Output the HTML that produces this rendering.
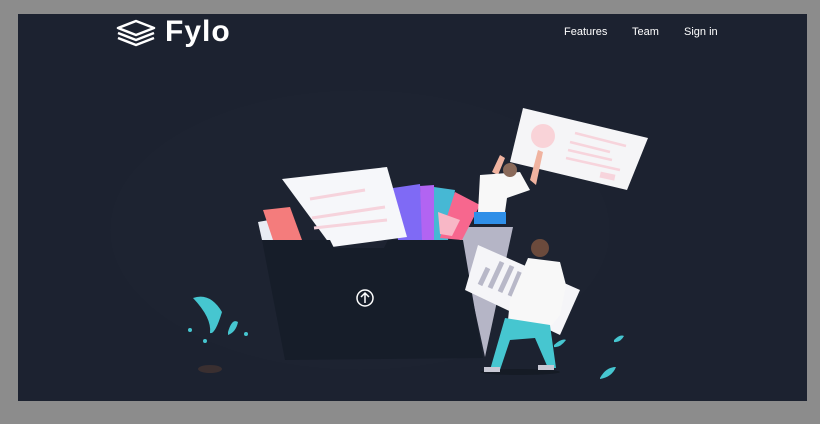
<!DOCTYPE html>
<html><head><style>
html,body{margin:0;padding:0;width:820px;height:424px;background:#8c8c8c;overflow:hidden;font-family:"Liberation Sans",sans-serif}
#p{position:absolute;left:18px;top:14px;width:789px;height:387px;background:#1c2230}
.nav{position:absolute;top:26px;color:#fff;font-size:11px}
.logo{position:absolute;left:165px;top:15px;color:#fff;font-size:30px;font-weight:bold;letter-spacing:1px}
</style></head><body>
<div id="p"></div>
<svg style="position:absolute;left:0;top:0" width="820" height="424">
<g fill="none" stroke="#fff" stroke-width="2.5" stroke-linejoin="round">
<path d="M118 28 L136 21 L154 28 L136 35 Z"/>
<path d="M118 33 L136 40 L154 33"/>
<path d="M118 38 L136 45 L154 38"/>
</g>
<ellipse cx="360" cy="230" rx="250" ry="140" fill="#1d2331"/>
<polygon points="457,227 513,227 485,357" fill="#b5b5c6"/>
<polygon points="258,222 280,218 290,240 262,240" fill="#e8ecf4"/>
<polygon points="263,210 290,207 302,240 273,240" fill="#f47c7c"/>
<polygon points="393,188 420,184 423,240 398,240" fill="#7f6af5"/>
<polygon points="420,186 434,185 436,240 422,240" fill="#b264f2"/>
<polygon points="434,187 455,190 448,240 434,240" fill="#46b8d4"/>
<polygon points="455,192 480,205 462,240 440,238" fill="#f7678e"/>
<polygon points="438,212 460,220 452,236 440,234" fill="#f8b7c6"/>
<polygon points="282,179 387,167 407,237 332,247" fill="#f6f7fa"/>
<g stroke="#f6d3dc" stroke-width="3"><line x1="310" y1="199" x2="365" y2="190"/><line x1="312" y1="218" x2="385" y2="207"/><line x1="314" y1="228" x2="387" y2="220"/></g>
<polygon points="262,240 330,240 334,248 384,248 388,240 463,240 483,358 285,360" fill="#161d29"/>
<circle cx="365" cy="298" r="8" fill="none" stroke="#fff" stroke-width="1.5"/>
<path d="M365 303 V293 M361 297 L365 293 L369 297" stroke="#fff" stroke-width="1.5" fill="none"/>
<polygon points="523,108 648,138 627,190 510,162" fill="#f5f5f7"/>
<circle cx="543" cy="136" r="12" fill="#f9d3d8"/>
<g stroke="#f7d4dc" stroke-width="2.5"><line x1="575" y1="133" x2="626" y2="146"/><line x1="570" y1="142" x2="610" y2="152"/><line x1="568" y1="150" x2="612" y2="160"/><line x1="566" y1="158" x2="620" y2="170"/></g>
<rect x="600" y="173" width="15" height="6" fill="#f7d4dc" transform="rotate(12 607 176)"/>
<path d="M492 172 L500 155 L505 158 L498 175 Z M530 180 L538 150 L543 152 L536 185 Z" fill="#f0b3a0"/>
<path d="M480 175 L520 172 L530 190 L507 198 L505 212 L478 212 Z" fill="#f8f8f8"/>
<rect x="474" y="212" width="32" height="12" fill="#2f8fe8"/>
<circle cx="510" cy="170" r="7" fill="#8a6a5a"/>
<polygon points="478,245 580,290 560,335 465,290" fill="#f5f5f8"/>
<g stroke="#b8b8c8" stroke-width="5"><line x1="480" y1="285" x2="488" y2="268"/><line x1="490" y1="288" x2="502" y2="262"/><line x1="500" y1="292" x2="512" y2="266"/><line x1="510" y1="296" x2="520" y2="272"/></g>
<circle cx="540" cy="248" r="9" fill="#6b4a3c"/>
<path d="M528 258 L560 262 L566 285 L560 315 L552 325 L508 320 L510 300 Z" fill="#f8f8f8"/>
<path d="M505 318 L550 325 L556 368 L548 368 L535 338 L510 340 L500 370 L490 370 Z" fill="#46c6d0"/>
<ellipse cx="520" cy="372" rx="40" ry="3" fill="#151b25"/>
<rect x="484" y="367" width="16" height="5" fill="#c8c8d4"/>
<rect x="538" y="365" width="16" height="5" fill="#c8c8d4"/>
<g fill="#46c6d0">
<path d="M193 298 Q210 292 222 312 Q215 335 210 333 Q212 318 193 298Z"/>
<path d="M228 332 Q232 318 238 322 Q236 332 228 335Z"/>
<path d="M554 345 Q562 338 566 340 Q560 348 554 347Z"/>
<path d="M614 340 Q620 334 624 336 Q620 343 614 342Z"/>
<path d="M600 378 Q606 367 616 367 Q612 377 600 379Z"/>
<circle cx="190" cy="330" r="2"/><circle cx="246" cy="334" r="2"/><circle cx="205" cy="341" r="2"/>
</g>
<ellipse cx="210" cy="369" rx="12" ry="4" fill="#3a2f30"/>
</svg>
<div class="logo">Fylo</div>
<div class="nav" style="left:564px">Features</div>
<div class="nav" style="left:632px">Team</div>
<div class="nav" style="left:684px">Sign in</div>
</body></html>
